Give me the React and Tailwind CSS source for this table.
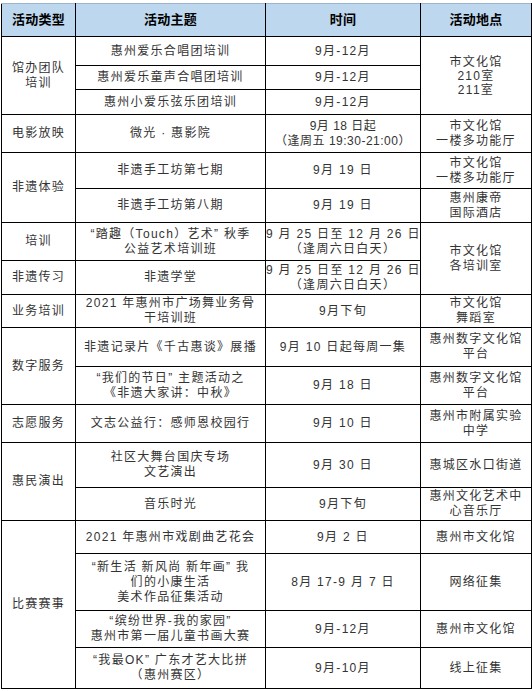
import React from "react";

const F = { fontFamily: '"Liberation Sans", "Noto Sans CJK SC", sans-serif' };

function C({ children, rs, lead = "leading-[15px]" }) {
  return (
    <td
      rowSpan={rs}
      className={`border border-black text-center align-middle text-[12px] tracking-[1.3px] text-[#333] px-0 ${lead}`}
    >
      {children}
    </td>
  );
}

function L({ lines }) {
  return lines.map((l, i) => <div key={i} className="whitespace-pre">{l}</div>);
}

export default function App() {
  return (
    <div className="bg-white w-[532px] h-[691px] pt-[3px] pl-[1px]" style={F}>
      <table className="table-fixed border-collapse w-[530px]">
        <colgroup>
          <col className="w-[74px]" />
          <col className="w-[190px]" />
          <col className="w-[155px]" />
          <col className="w-[111px]" />
        </colgroup>
        <thead>
          <tr className="h-[33px] bg-[#bdd7ee]">
            {["活动类型", "活动主题", "时间", "活动地点"].map((t) => (
              <th key={t} className="border border-black border-t-[#9db4cc] text-[13px] font-bold text-black tracking-[0.3px] text-center align-middle">
                {t}
              </th>
            ))}
          </tr>
        </thead>
        <tbody>
          <tr className="h-[29px]">
            <C rs={3}><L lines={["馆办团队", "培训"]} /></C>
            <C>惠州爱乐合唱团培训</C>
            <C>9月-12月</C>
            <C rs={3} lead="leading-[14px]"><L lines={["市文化馆", "210室", "211室"]} /></C>
          </tr>
          <tr className="h-[24px]">
            <C>惠州爱乐童声合唱团培训</C>
            <C>9月-12月</C>
          </tr>
          <tr className="h-[25px]">
            <C>惠州小爱乐弦乐团培训</C>
            <C>9月-12月</C>
          </tr>
          <tr className="h-[38px]">
            <C>电影放映</C>
            <C>微光 · 惠影院</C>
            <C><div className="tracking-[0.5px]"><L lines={["9月 18 日起", "（逢周五 19:30-21:00）"]} /></div></C>
            <C><L lines={["市文化馆", "一楼多功能厅"]} /></C>
          </tr>
          <tr className="h-[36px]">
            <C rs={2}>非遗体验</C>
            <C>非遗手工坊第七期</C>
            <C>9月 19 日</C>
            <C><L lines={["市文化馆", "一楼多功能厅"]} /></C>
          </tr>
          <tr className="h-[34px]">
            <C>非遗手工坊第八期</C>
            <C>9月 19 日</C>
            <C><L lines={["惠州康帝", "国际酒店"]} /></C>
          </tr>
          <tr className="h-[38px]">
            <C>培训</C>
            <C><L lines={["“踏趣（Touch）艺术” 秋季", "公益艺术培训班"]} /></C>
            <C><L lines={["9 月 25 日至 12 月 26 日", "（逢周六日白天）"]} /></C>
            <C rs={2}><L lines={["市文化馆", "各培训室"]} /></C>
          </tr>
          <tr className="h-[34px]">
            <C>非遗传习</C>
            <C>非遗学堂</C>
            <C><L lines={["9 月 25 日至 12 月 26 日", "（逢周六日白天）"]} /></C>
          </tr>
          <tr className="h-[33px]">
            <C>业务培训</C>
            <C><L lines={["2021 年惠州市广场舞业务骨", "干培训班"]} /></C>
            <C>9月下旬</C>
            <C><L lines={["市文化馆", "舞蹈室"]} /></C>
          </tr>
          <tr className="h-[39px]">
            <C rs={2}>数字服务</C>
            <C>非遗记录片《千古惠谈》展播</C>
            <C>9月 10 日起每周一集</C>
            <C><L lines={["惠州数字文化馆", "平台"]} /></C>
          </tr>
          <tr className="h-[38px]">
            <C><L lines={["“我们的节日” 主题活动之", "《非遗大家讲：中秋》"]} /></C>
            <C>9月 18 日</C>
            <C><L lines={["惠州数字文化馆", "平台"]} /></C>
          </tr>
          <tr className="h-[38px]">
            <C>志愿服务</C>
            <C>文志公益行：感师恩校园行</C>
            <C>9月 10 日</C>
            <C><L lines={["惠州市附属实验", "中学"]} /></C>
          </tr>
          <tr className="h-[45px]">
            <C rs={2}>惠民演出</C>
            <C><L lines={["社区大舞台国庆专场", "文艺演出"]} /></C>
            <C>9月 30 日</C>
            <C>惠城区水口街道</C>
          </tr>
          <tr className="h-[33px]">
            <C>音乐时光</C>
            <C>9月下旬</C>
            <C><L lines={["惠州文化艺术中", "心音乐厅"]} /></C>
          </tr>
          <tr className="h-[33px]">
            <C rs={4}>比赛赛事</C>
            <C>2021 年惠州市戏剧曲艺花会</C>
            <C>9月 2 日</C>
            <C>惠州市文化馆</C>
          </tr>
          <tr className="h-[57px]">
            <C><L lines={["“新生活 新风尚 新年画” 我", "们的小康生活", "美术作品征集活动"]} /></C>
            <C>8月 17-9 月 7 日</C>
            <C>网络征集</C>
          </tr>
          <tr className="h-[37px]">
            <C><L lines={["“缤纷世界-我的家园”", "惠州市第一届儿童书画大赛"]} /></C>
            <C>9月-12月</C>
            <C>惠州市文化馆</C>
          </tr>
          <tr className="h-[41px]">
            <C><L lines={["“我最OK” 广东才艺大比拼", "（惠州赛区）"]} /></C>
            <C>9月-10月</C>
            <C>线上征集</C>
          </tr>
        </tbody>
      </table>
    </div>
  );
}
